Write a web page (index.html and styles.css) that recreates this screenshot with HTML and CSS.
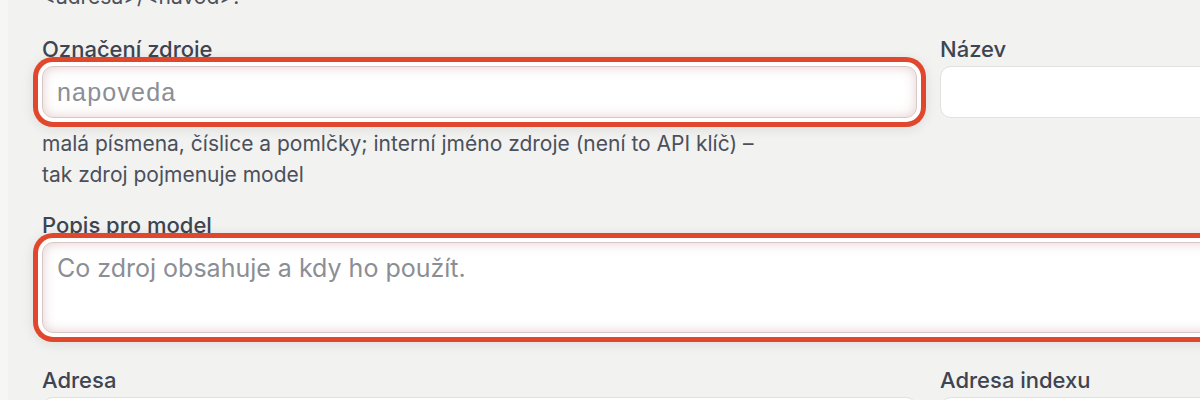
FILE: index.html
```html
<!DOCTYPE html>
<html lang="cs">
<head>
<meta charset="utf-8">
<link rel="stylesheet" href="styles.css">
</head>
<body>
<div class="page">
  <div class="panel">
    <p class="intro">&lt;adresa&gt;/&lt;navod&gt;.</p>
    <form class="form">
      <div class="field">
        <label class="label">Označení zdroje</label>
        <input class="input input-slug is-focus" placeholder="napoveda">
        <p class="help">malá písmena, číslice a pomlčky; interní jméno zdroje (není to API klíč) – tak zdroj pojmenuje model</p>
      </div>
      <div class="field">
        <label class="label">Název</label>
        <input class="input">
      </div>
      <div class="field field-wide">
        <label class="label">Popis pro model</label>
        <textarea class="input textarea is-focus" placeholder="Co zdroj obsahuje a kdy ho použít."></textarea>
      </div>
      <div class="field field-next">
        <label class="label">Adresa</label>
        <input class="input">
      </div>
      <div class="field field-next">
        <label class="label">Adresa indexu</label>
        <input class="input">
      </div>
    </form>
  </div>
</div>
</body>
</html>
```

FILE: styles.css
```css
html, body {
  margin: 0;
  padding: 0;
  height: 100%;
  overflow: hidden;
}
body {
  background: #f6f6f4;
  font-family: "Inter", "Noto Sans", sans-serif;
  color: #3f4451;
}
.page {
  padding-left: 8px;
  height: 100%;
}
.panel {
  background: #f2f2f0;
  height: 100%;
  padding-left: 34px;
  overflow: hidden;
}
.intro {
  margin: -19px 0 0 0;
  font-size: 21px;
  line-height: 31px;
  color: #4b505c;
}
.form {
  display: grid;
  grid-template-columns: 875px 875px;
  column-gap: 23px;
  margin-top: 24px;
}
.field {
  display: flex;
  flex-direction: column;
}
.field-wide {
  grid-column: 1 / span 2;
  margin-top: 22px;
}
.field-next {
  margin-top: 34px;
}
.label {
  font-size: 22px;
  line-height: 26px;
  font-weight: 500;
  color: #3f4451;
  margin-bottom: 4px;
}
.input {
  box-sizing: border-box;
  height: 52px;
  border: 1px solid #e1e1df;
  border-radius: 11px;
  background: #ffffff;
  padding: 0 14px;
  font-family: "Inter", sans-serif;
  font-size: 25px;
  color: #3f4451;
  outline: none;
  width: 100%;
}
.input::placeholder {
  color: #8b8e94;
}
.input-slug {
  font-family: "Liberation Sans", Arial, sans-serif;
  font-size: 25px;
  letter-spacing: 1.2px;
  padding-left: 14px;
}
.textarea {
  height: 91px;
  padding: 9px 14px;
  line-height: 33px;
  resize: none;
  display: block;
}
.is-focus {
  border-color: #d9c6c6;
  box-shadow:
    inset 0 0 12px rgba(170, 90, 90, 0.30),
    0 0 0 4px #ffffff,
    0 0 0 9px #e0472c,
    0 2px 12px 10px rgba(0, 0, 0, 0.08);
}
.help {
  margin: 10px 0 0 0;
  max-width: 745px;
  font-size: 21px;
  line-height: 31px;
  color: #4b505c;
}
```
